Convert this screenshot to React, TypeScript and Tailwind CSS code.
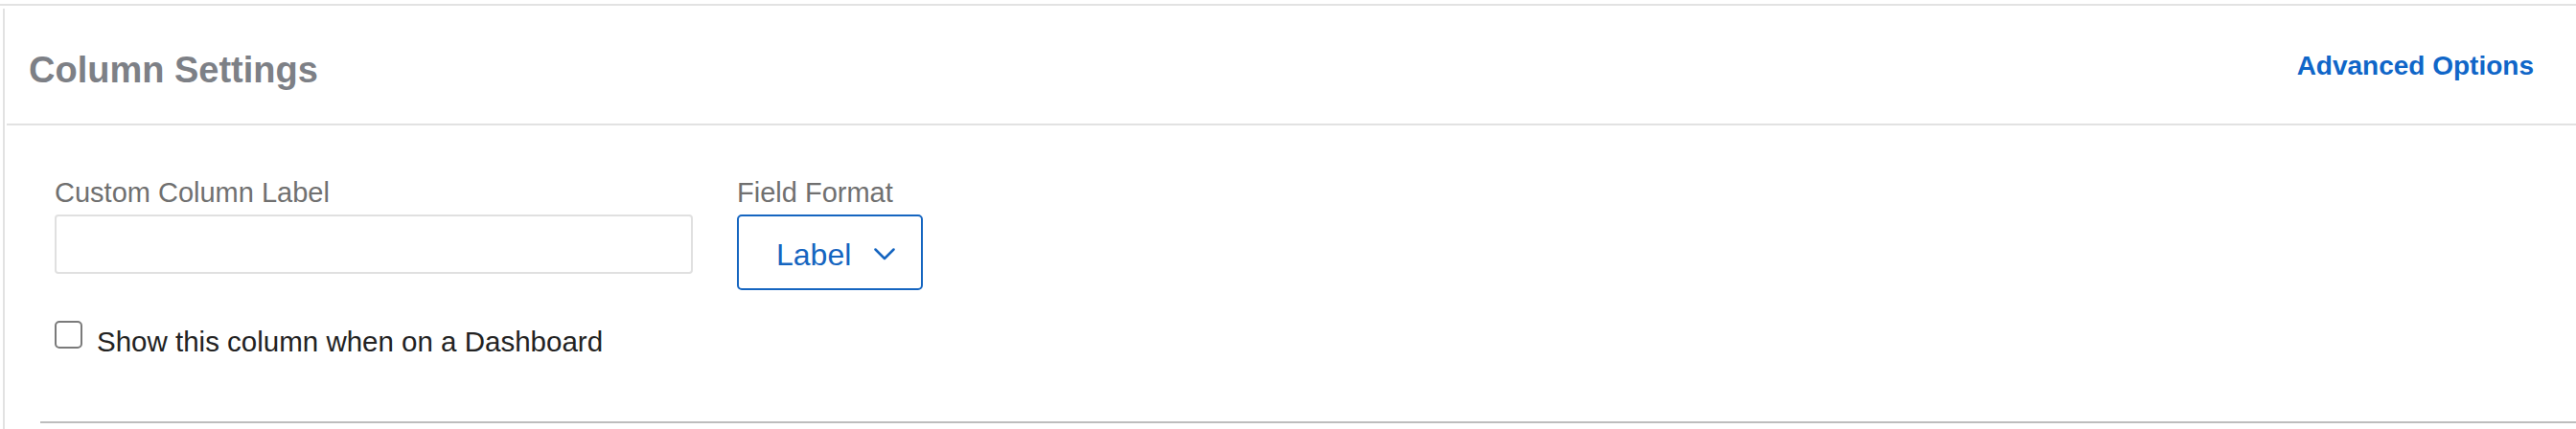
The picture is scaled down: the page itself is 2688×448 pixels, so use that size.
import React, { useState } from "react";

const FONT = "font-['Liberation_Sans',Arial,sans-serif]";

const Chevron: React.FC = () => (
  <svg width="22" height="13" viewBox="0 0 22 13" fill="none" className="shrink-0">
    <path d="M1.5 1.5 L11 11 L20.5 1.5" stroke="#1565c0" strokeWidth="2.5" strokeLinecap="round" strokeLinejoin="round" />
  </svg>
);

export default function App() {
  const [label, setLabel] = useState("");
  const [showOnDashboard, setShowOnDashboard] = useState(false);

  return (
    <div className={`${FONT} bg-white w-[2688px] h-[448px] overflow-hidden pt-[4px]`}>
      {/* line from the block above */}
      <div className="h-[2px] bg-[#e2e2e2]" />

      {/* Column settings panel */}
      <div className="mt-[3px] ml-[3px] border-l-2 border-[#e2e2e2] h-[500px]">
        {/* Header */}
        <div className="ml-[2px] h-[122px] border-b-2 border-[#e2e2e2] flex items-center justify-between pl-[23px] pr-[44px]">
          <h2 className="mt-[8px] text-[38px] leading-none font-bold text-[#7d8086]">Column Settings</h2>
          <a href="#" className="text-[28px] leading-none font-bold text-[#1066c8]">
            Advanced Options
          </a>
        </div>

        {/* Body */}
        <div className="pt-[53px] pl-[52px]">
          <div className="flex gap-[46px]">
            <div className="w-[666px]">
              <label className="block text-[29px] leading-[34px] text-[#707070]">Custom Column Label</label>
              <input
                type="text"
                value={label}
                onChange={(e) => setLabel(e.target.value)}
                className="mt-[6px] block w-full h-[62px] border-2 border-[#e0e0e0] rounded-[4px] px-3 text-[29px] outline-none"
              />
            </div>
            <div>
              <label className="block text-[29px] leading-[34px] text-[#707070]">Field Format</label>
              <button className="mt-[6px] w-[194px] h-[79px] border-2 border-[#1565c0] rounded-[5px] flex items-center pl-[39px] pt-[4px] gap-[24px] bg-white">
                <span className="text-[32px] leading-none text-[#1565c0]">Label</span>
                <Chevron />
              </button>
            </div>
          </div>

          {/* Dashboard checkbox */}
          <label className="mt-[32px] flex items-start gap-[15px] cursor-pointer w-fit">
            <span
              onClick={() => setShowOnDashboard(!showOnDashboard)}
              className="w-[29px] h-[29px] border-[2.5px] border-[#7a7a7a] rounded-[5px] bg-white shrink-0"
            />
            <span className="mt-[5px] text-[29.5px] leading-[34px] text-[#222222]">Show this column when on a Dashboard</span>
          </label>
        </div>

        <div className="mt-[66px] ml-[37px] h-[2px] bg-[#bdbdbd]" />
      </div>
    </div>
  );
}
